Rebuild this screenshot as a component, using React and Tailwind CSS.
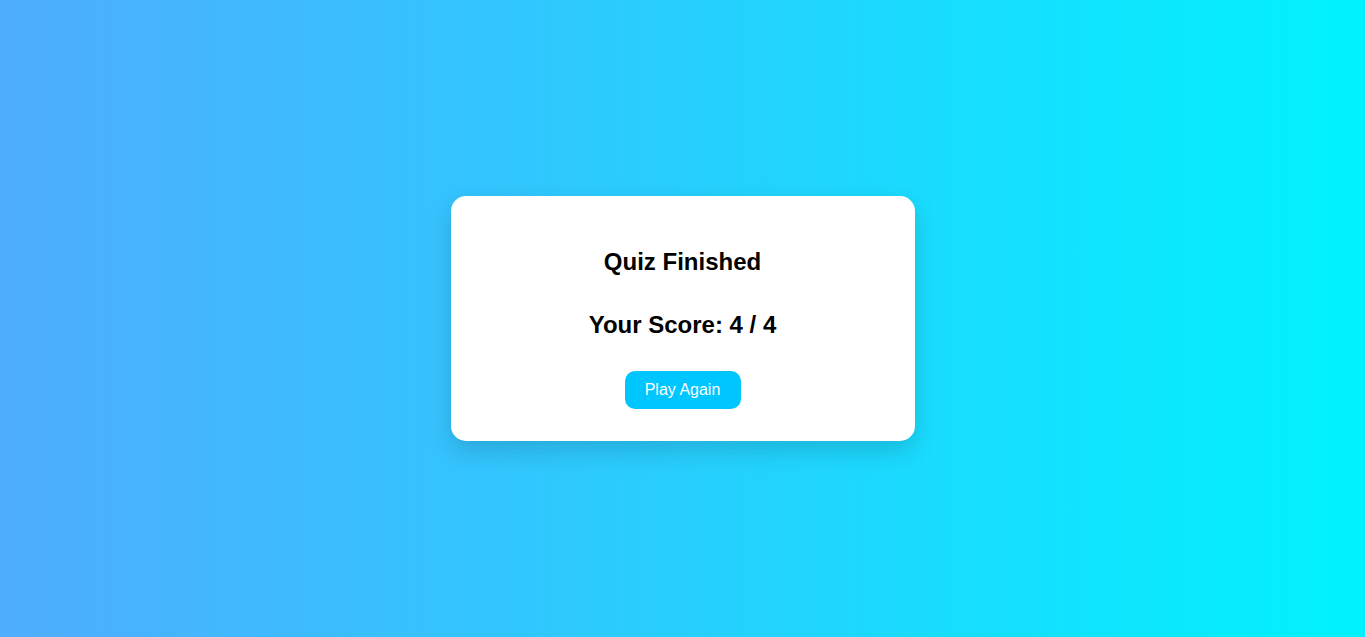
import React, { useState } from 'react';

const App = () => {
  const [score] = useState(4);
  const total = 4;

  return (
    <div className="min-h-screen w-full flex items-center justify-center bg-[linear-gradient(to_right,#4facfe,#00f2fe)] font-['Liberation_Sans',Arial,sans-serif]">
      <div className="w-[464px] bg-white rounded-[15px] shadow-[0_10px_25px_rgba(0,0,0,0.15)] px-[30px] pt-[52px] pb-[32px] flex flex-col items-center text-center">
        <h2 className="text-[24px] leading-[28px] font-bold text-black">Quiz Finished</h2>
        <h2 className="mt-[35px] text-[24px] leading-[28px] font-bold text-black">Your Score: {score} / {total}</h2>
        <button className="mt-[32px] h-[38px] w-[116px] rounded-[10px] bg-[#00c6ff] text-white text-[16px] leading-[18px] cursor-pointer">
          Play Again
        </button>
      </div>
    </div>
  );
};

export default App;
